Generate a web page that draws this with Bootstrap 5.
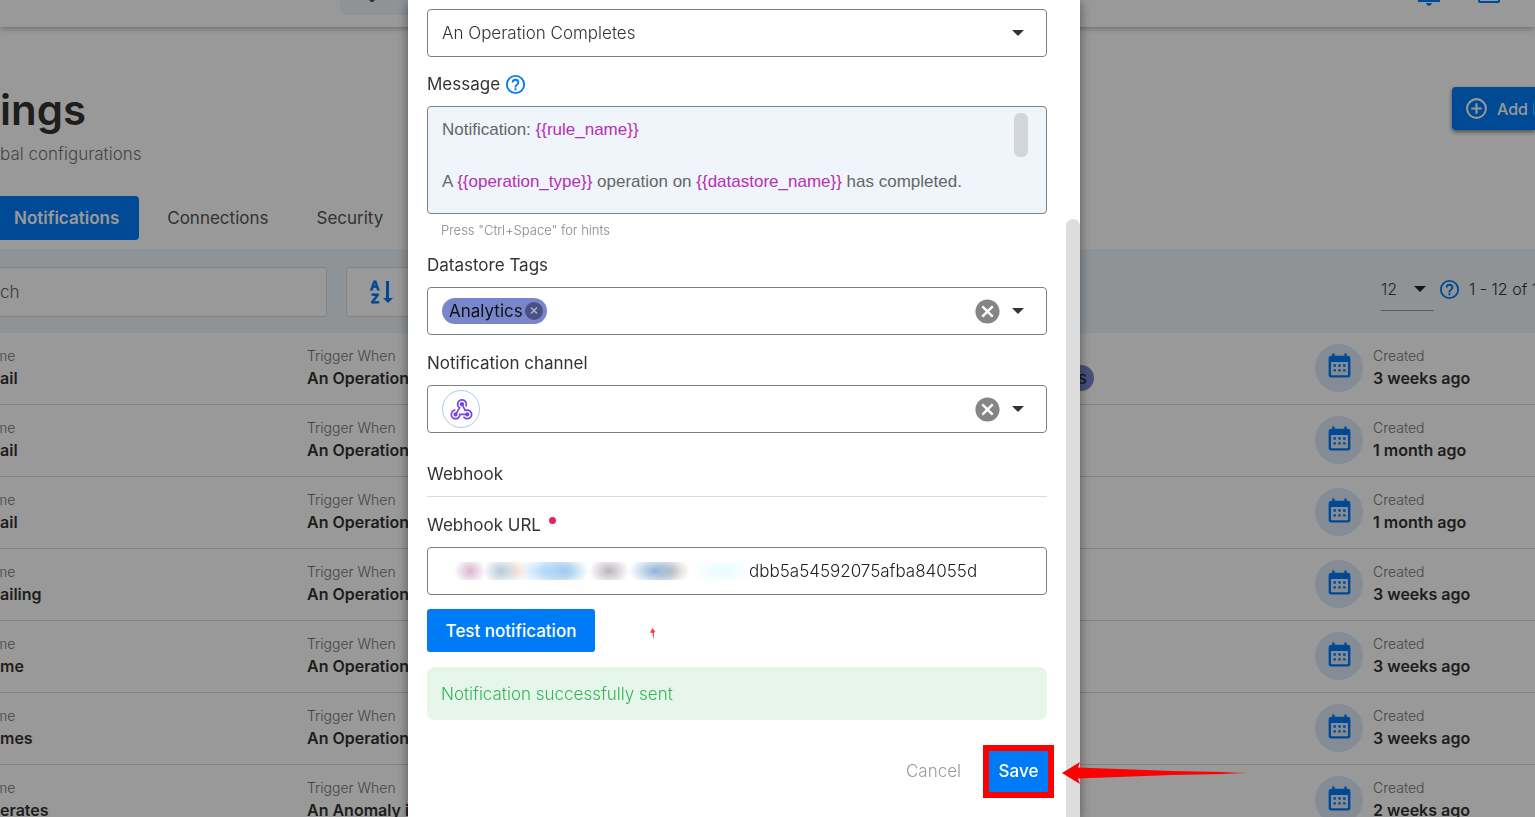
<!DOCTYPE html>
<html lang="en">
<head>
<meta charset="utf-8">
<meta name="viewport" content="width=device-width, initial-scale=1">
<title>Notifications</title>
<link href="https://cdn.jsdelivr.net/npm/bootstrap@5.3.0/dist/css/bootstrap.min.css" rel="stylesheet">
<script src="https://cdn.jsdelivr.net/npm/bootstrap@5.3.0/dist/js/bootstrap.bundle.min.js"></script>
<style>
:root{--brand:#007bf7;--panel:#eff5fa;--ink:#333}
html,body{height:100%}
body{font-family:Inter,"Liberation Sans",sans-serif;font-size:17px;line-height:24px;color:var(--ink);overflow:hidden}
button{font:inherit}
svg{display:block;flex:none}
.page-shell{height:100vh;overflow:hidden}
.top-bar{height:27px;box-shadow:0 1px 6px rgba(0,0,0,.35);padding-left:340px;padding-right:35px}
.top-search{width:440px;height:15px;background:var(--panel);border-radius:0 0 6px 6px;padding-left:29px}
.top-icons{gap:38px}
.title-row{height:169px;padding-top:55px}
.page-title{font-size:42px;line-height:56px;font-weight:600;margin:0 0 4px}
.muted-light{color:#757575;font-weight:300}
.add-btn{background:var(--brand);color:#fff;height:43px;border-radius:4px 0 0 4px;font-size:16px;font-weight:500;padding:0 0 0 11px;margin-top:5px;width:83px;overflow:hidden;white-space:nowrap;box-shadow:0 2px 4px rgba(0,0,0,.5)}
.tab-row{height:53px}
.tab-item{height:44px;line-height:44px;padding:0 20px;border-radius:4px;color:#555;font-weight:400;text-decoration:none}
.tab-item.active{background:var(--brand);color:#fff;font-weight:600;padding-left:14px;border-radius:0 4px 4px 0}
.tool-strip{background:var(--panel);height:84px;padding-top:18px}
.search-box{width:327px;height:50px;border:1px solid #dadada;border-left:0;border-radius:0 4px 4px 0;padding:0;background:#fff;color:#666;font-weight:300}
.sort-btn{width:120px;height:50px;border:1px solid #dadada;border-radius:4px;background:#fff;padding:0 0 0 20px;margin-left:19px;color:var(--brand)}
.pager{font-size:16px}
.per-page{width:53px;height:44px;border:0;border-bottom:1px solid #999;appearance:none;background:transparent url("data:image/svg+xml,%3Csvg xmlns='http://www.w3.org/2000/svg' viewBox='0 0 12 6'%3E%3Cpath fill='%23222' d='M0 0h12L6 6z'/%3E%3C/svg%3E") no-repeat right 8px center/12px 6px;color:#444;font-weight:300;padding:0}
.rules-table{table-layout:fixed;width:100%;margin-top:-1px}
.rules-table td{height:72px;padding:0;border-bottom:1px solid #dadada;vertical-align:middle;overflow:hidden;white-space:nowrap}
.rules-table .cell-label{font-size:14px;line-height:22px;color:#757575;font-weight:300}
.rules-table .cell-value{font-size:16px;line-height:22px;font-weight:600;color:#333;padding-bottom:2px}
.col-name{width:307px}.col-date{width:220px}
.name-label{margin-left:-5px}
.row-pill{display:inline-block;height:26px;line-height:26px;border-radius:13px;background:#7986cb;color:#222;padding:0 7px 0 90px;margin:20px 221px 0 0}
.date-dot{width:48px;height:48px;padding-bottom:4px;margin-right:10px;border-radius:50%;background:#dfe9f8;color:var(--brand)}
.dim-layer{position:fixed;inset:0;background:rgba(0,0,0,.4);padding-right:47px}
.dialog-box{position:relative;width:672px;min-height:100vh;background:#fff;padding:9px 33px 0 19px;box-shadow:0 3px 10px 1px rgba(0,0,0,.4)}
.dialog-scroll{position:absolute;right:0;top:219px;bottom:0;width:14px;background:#ddd;border-radius:7px 7px 0 0}
.field-box{height:48px;border:1px solid #808080;border-radius:4px;background-color:#fff;width:100%;padding:0 14px}
select.field-box{appearance:none;color:#333;font-weight:300;background-image:url("data:image/svg+xml,%3Csvg xmlns='http://www.w3.org/2000/svg' viewBox='0 0 12 6'%3E%3Cpath fill='%23333' d='M0 0h12L6 6z'/%3E%3C/svg%3E");background-repeat:no-repeat;background-position:right 22px center;background-size:12px 6px}
.field-name{display:flex;align-items:center;height:24px;margin:16px 0 10px;font-weight:400}
.field-name.is-tight{margin-top:15px}
.ghost-btn{border:0;background:none;padding:0}
.editor-box{position:relative;height:108px;border:1px solid #808080;border-radius:4px;background:var(--panel);padding:10px 14px;font:17px/26px "Liberation Sans",Arial,sans-serif;color:#666}
.editor-box b{font-weight:400;color:#b62fb6}
.editor-thumb{position:absolute;right:18px;top:6px;width:14px;height:44px;border-radius:6px;background:#d2d5da}
.hint-line{font-size:13px;line-height:20px;font-weight:300;color:#888;margin:6px 0 -2px 14px}
.tag-chip{height:26px;border-radius:13px;background:#7986cb;color:#111;padding:0 4px 0 7px;gap:2px}
.channel-ring{width:38px;height:38px;border:1px solid #a8c8f5;border-radius:50%;color:#7646dc}
.clear-btn{color:#858585;margin-right:10px}
.caret-btn{margin-right:8px}
.section-head{margin-top:29px;height:35px;border-bottom:1px solid #dcdcdc}
.need-dot{width:7px;height:7px;border-radius:50%;background:#e91e63;margin:0 0 9px 8px}
.masked-part{width:307px;height:18px;background:
radial-gradient(ellipse 16px 14px at 28px 50%,#d8b4cf,transparent),
radial-gradient(ellipse 18px 15px at 59px 50%,#b4c8d6,transparent),
radial-gradient(ellipse 12px 14px at 74px 50%,#f7dfcf,transparent),
radial-gradient(ellipse 30px 16px at 105px 50%,#b0d6f8,transparent),
radial-gradient(ellipse 26px 16px at 121px 50%,#8dc1e6,transparent),
radial-gradient(ellipse 20px 15px at 167px 50%,#bdb3bf,transparent),
radial-gradient(ellipse 26px 15px at 213px 50%,#8fb3da,transparent),
radial-gradient(ellipse 20px 14px at 228px 50%,#c5c2bd,transparent),
radial-gradient(ellipse 32px 16px at 280px 50%,#e8fbff,transparent)}
.url-input{border:0;outline:0;padding:0;font-weight:300;color:#222;min-width:0}
.test-btn{height:43px;width:168px;border:0;border-radius:3px;background:var(--brand);color:#fff;font-weight:500;padding:0}
.test-row{margin-top:14px}
.speck{margin-left:55px;margin-top:6px}
.sent-note{height:53px;border-radius:8px;background:#e7f6eb;color:#35b558;font-weight:300;padding:0 14px;margin-top:15px}
.action-row{margin-top:25px}
.action-row button{padding-bottom:2px}
.cancel-btn{color:#999;font-weight:300;margin-right:22px}
.save-btn{width:71px;height:53px;border:6px solid #f00;border-radius:0;background:var(--brand);color:#fff;font-weight:500;padding:0;margin-right:-7px}
.pointer-arrow{position:absolute;left:654px;top:761px}
</style>
</head>
<body>
<main class="page-shell">
  <header class="top-bar d-flex justify-content-between bg-white">
    <div class="top-search"><svg width="6" height="2" viewBox="0 0 6 2"><path fill="#555" d="M0 0h6L4 2H2z"/></svg></div>
    <div class="top-icons d-flex">
      <svg width="22" height="6" viewBox="0 0 22 6" fill="#007bf7"><path d="M0 0h22v2H0zM8 3h6q-1 3-3 3t-3-3z"/></svg>
      <svg width="22" height="4" viewBox="0 0 22 4" fill="none" stroke="#007bf7" stroke-width="2"><path d="M1-2v3q0 1 1 1h18q1 0 1-1v-3"/></svg>
    </div>
  </header>

  <section class="title-row d-flex justify-content-between align-items-start">
    <div>
      <h1 class="page-title">ings</h1>
      <p class="muted-light mb-0">bal configurations</p>
    </div>
    <button class="btn add-btn d-flex align-items-center"><svg class="me-2" width="25" height="25" viewBox="0 0 24 24" fill="currentColor"><path d="M12,20C7.59,20 4,16.41 4,12C4,7.59 7.59,4 12,4C16.41,4 20,7.59 20,12C20,16.41 16.41,20 12,20M12,2A10,10 0 0,0 2,12A10,10 0 0,0 12,22A10,10 0 0,0 22,12A10,10 0 0,0 12,2M13,7H11V11H7V13H11V17H13V13H17V11H13V7Z"/></svg>Add N</button>
  </section>

  <nav class="tab-row d-flex gap-2">
    <a class="tab-item active" href="#">Notifications</a>
    <a class="tab-item" href="#">Connections</a>
    <a class="tab-item" href="#">Security</a>
  </nav>

  <section class="tool-strip d-flex align-items-start">
    <input class="search-box" type="search" aria-label="Search" value="ch">
    <button class="sort-btn" aria-label="Sort">
      <svg width="30" height="26" viewBox="0 0 30 26"><g fill="currentColor" stroke="currentColor" stroke-width=".8" font-family="Liberation Sans" font-weight="700" font-size="13"><text x="3" y="11">A</text><text x="4" y="24">Z</text></g><path fill="currentColor" d="M19 2h3v17h4l-5 5-5-5h3z"/></svg>
    </button>
    <div class="pager d-flex align-items-center ms-auto gap-1">
      <select class="per-page" aria-label="Rows per page"><option>12</option></select>
      <svg width="23" height="23" viewBox="0 0 24 24" fill="#007bf7"><path d="M11,18H13V16H11V18M12,2A10,10 0 0,0 2,12A10,10 0 0,0 12,22A10,10 0 0,0 22,12A10,10 0 0,0 12,2M12,20C7.59,20 4,16.41 4,12C4,7.59 7.59,4 12,4C16.41,4 20,7.59 20,12C20,16.41 16.41,20 12,20M12,6A4,4 0 0,0 8,10H10A2,2 0 0,1 12,8A2,2 0 0,1 14,10C14,12 11,11.75 11,15H13C13,12.75 16,12.5 16,10A4,4 0 0,0 12,6Z"/></svg>
      <span class="ms-1 text-nowrap overflow-hidden fw-light" style="width:66px">1 - 12 of 1</span>
    </div>
  </section>

  <table class="rules-table">
    <colgroup><col class="col-name"><col><col class="col-date"></colgroup>
    <tbody id="rules"></tbody>
  </table>
</main>

<div class="dim-layer d-flex justify-content-center">
  <form class="dialog-box" role="dialog" aria-label="Notification rule">
    <select class="field-box d-block" aria-label="Trigger when"><option>An Operation Completes</option></select>

    <div class="field-name is-tight" id="msg-name">Message
      <svg class="ms-1" width="23" height="23" viewBox="0 0 24 24" fill="#007bf7"><path d="M11,18H13V16H11V18M12,2A10,10 0 0,0 2,12A10,10 0 0,0 12,22A10,10 0 0,0 22,12A10,10 0 0,0 12,2M12,20C7.59,20 4,16.41 4,12C4,7.59 7.59,4 12,4C16.41,4 20,7.59 20,12C20,16.41 16.41,20 12,20M12,6A4,4 0 0,0 8,10H10A2,2 0 0,1 12,8A2,2 0 0,1 14,10C14,12 11,11.75 11,15H13C13,12.75 16,12.5 16,10A4,4 0 0,0 12,6Z"/></svg>
    </div>
    <div class="editor-box">
      <div role="textbox" aria-multiline="true" aria-labelledby="msg-name" contenteditable="true" spellcheck="false">Notification: <b>{{rule_name}}</b><br><br>A <b>{{operation_type}}</b> operation on <b>{{datastore_name}}</b> has completed.</div>
      <span class="editor-thumb"></span>
    </div>
    <p class="hint-line">Press "Ctrl+Space" for hints</p>

    <div class="field-name is-tight" id="tags-name">Datastore Tags</div>
    <div class="field-box d-flex align-items-center" role="group" aria-labelledby="tags-name">
      <span class="tag-chip d-flex align-items-center">Analytics<button type="button" class="ghost-btn" aria-label="Remove"><svg width="18" height="18" viewBox="0 0 18 18"><circle cx="9" cy="9" r="9" fill="#4b5180"/><path d="M6 5.500l6 6M12 5.500l-6 6" stroke="#a9b2df" stroke-width="1.500"/></svg></button></span>
      <button type="button" class="ghost-btn clear-btn ms-auto" aria-label="Clear"><svg width="29" height="29" viewBox="0 0 24 24" fill="currentColor"><path d="M12,2C17.53,2 22,6.47 22,12C22,17.53 17.53,22 12,22C6.47,22 2,17.53 2,12C2,6.47 6.47,2 12,2M15.590,7L12,10.590L8.410,7L7,8.410L10.590,12L7,15.590L8.410,17L12,13.410L15.590,17L17,15.590L13.410,12L17,8.410L15.590,7Z"/></svg></button>
      <button type="button" class="ghost-btn caret-btn" aria-label="Open"><svg width="12" height="6" viewBox="0 0 12 6"><path fill="#333" d="M0 0h12L6 6z"/></svg></button>
    </div>

    <div class="field-name" id="chan-name">Notification channel</div>
    <div class="field-box d-flex align-items-center" role="group" aria-labelledby="chan-name">
      <span class="channel-ring d-flex align-items-center justify-content-center"><svg width="27" height="27" viewBox="0 0 24 24" fill="currentColor"><path d="M10.46,19C9,21.07 6.15,21.59 4.09,20.15C2.04,18.71 1.56,15.84 3,13.75C3.87,12.5 5.21,11.83 6.58,11.77L6.63,13.2C5.72,13.27 4.84,13.74 4.27,14.56C3.27,16 3.58,17.94 4.95,18.91C6.33,19.87 8.26,19.5 9.26,18.07C9.57,17.62 9.75,17.13 9.82,16.63V15.62L15.4,15.58L15.47,15.47C16,14.55 17.15,14.23 18.05,14.75C18.95,15.27 19.26,16.43 18.73,17.35C18.2,18.26 17.04,18.58 16.14,18.06C15.73,17.83 15.44,17.46 15.31,17.04L11.24,17.06C11.13,17.73 10.87,18.38 10.46,19M17.74,11.86C20.27,12.17 22.07,14.44 21.76,16.93C21.45,19.43 19.15,21.2 16.62,20.89C15.13,20.71 13.9,19.86 13.19,18.68L14.43,17.96C14.92,18.73 15.75,19.28 16.75,19.41C18.5,19.62 20.05,18.43 20.26,16.76C20.47,15.09 19.23,13.56 17.5,13.35C16.96,13.29 16.44,13.36 15.97,13.53L15.12,13.97L12.54,9.2H12.32C11.26,9.16 10.41,8.29 10.44,7.25C10.47,6.21 11.4,5.4 12.45,5.44C13.5,5.5 14.33,6.35 14.3,7.39C14.28,7.83 14.11,8.23 13.84,8.54L15.74,12.05C16.36,11.85 17.04,11.78 17.74,11.86M8.25,9.14C7.25,6.79 8.31,4.1 10.62,3.12C12.94,2.14 15.62,3.25 16.62,5.6C17.21,6.97 17.09,8.47 16.42,9.67L15.18,8.95C15.6,8.14 15.67,7.15 15.27,6.22C14.59,4.62 12.78,3.85 11.23,4.5C9.67,5.16 8.97,7 9.65,8.6C9.93,9.26 10.4,9.77 10.97,10.11L11.36,10.32L8.29,15.31C8.32,15.36 8.36,15.42 8.39,15.5C8.88,16.41 8.54,17.56 7.62,18.05C6.71,18.54 5.56,18.18 5.06,17.24C4.57,16.31 4.91,15.16 5.83,14.67C6.22,14.46 6.65,14.41 7.06,14.5L9.37,10.73C8.9,10.3 8.5,9.76 8.25,9.14Z"/></svg></span>
      <button type="button" class="ghost-btn clear-btn ms-auto" aria-label="Clear"><svg width="29" height="29" viewBox="0 0 24 24" fill="currentColor"><path d="M12,2C17.53,2 22,6.47 22,12C22,17.53 17.53,22 12,22C6.47,22 2,17.53 2,12C2,6.47 6.47,2 12,2M15.590,7L12,10.590L8.410,7L7,8.410L10.590,12L7,15.590L8.410,17L12,13.410L15.590,17L17,15.590L13.410,12L17,8.410L15.590,7Z"/></svg></button>
      <button type="button" class="ghost-btn caret-btn" aria-label="Open"><svg width="12" height="6" viewBox="0 0 12 6"><path fill="#333" d="M0 0h12L6 6z"/></svg></button>
    </div>

    <div class="section-head">Webhook</div>

    <label class="field-name" for="hook-url">Webhook URL<span class="need-dot"></span></label>
    <div class="field-box d-flex align-items-center">
      <span class="masked-part flex-shrink-0"></span>
      <input class="url-input flex-grow-1" id="hook-url" type="text" value="dbb5a54592075afba84055d">
    </div>

    <div class="test-row d-flex align-items-center">
      <button type="button" class="test-btn">Test notification</button>
      <svg class="speck" width="6" height="12" viewBox="0 0 6 12"><path fill="#f44" d="M2.500 0L5.500 4 4 4.500V12L2.500 5 0 4.500z"/></svg>
    </div>
    <div class="sent-note d-flex align-items-center" role="status">Notification successfully sent</div>

    <div class="action-row d-flex align-items-center justify-content-end">
      <button type="button" class="ghost-btn cancel-btn">Cancel</button>
      <button type="submit" class="save-btn">Save</button>
    </div>

    <span class="dialog-scroll"></span>
    <svg class="pointer-arrow" width="190" height="24" viewBox="0 0 190 24"><defs><linearGradient id="fade"><stop offset=".85" stop-color="#f00"/><stop offset="1" stop-color="#f00" stop-opacity="0"/></linearGradient></defs><path fill="url(#fade)" d="M0 12L18 1 16 6.500 110 10 187 11.500v1L110 14 16 17.500 18 23z"/></svg>
  </form>
</div>

<script>
const rules = [
  ["ail", "An Operation", "3 weeks ago", "s"],
  ["ail", "An Operation", "1 month ago"],
  ["ail", "An Operation", "1 month ago"],
  ["ailing", "An Operation", "3 weeks ago"],
  ["me", "An Operation", "3 weeks ago"],
  ["mes", "An Operation", "3 weeks ago"],
  ["erates", "An Anomaly i", "2 weeks ago"]
];
const calendar = '<svg width="29" height="29" viewBox="0 0 24 24" fill="currentColor"><path d="M9 11H7V13H9V11M9 15H7V17H9V15M13 11H11V13H13V11M13 15H11V17H13V15M17 11H15V13H17V11M17 15H15V17H17V15M19 4H18V2H16V4H8V2H6V4H5C3.890 4 3 4.900 3 6V20A2 2 0 0 0 5 22H19A2 2 0 0 0 21 20V6A2 2 0 0 0 19 4M19 20H5V9H19V20Z"/></svg>';
document.getElementById("rules").innerHTML = rules.map(([name, trigger, date, tag]) => `
<tr>
  <td><div class="cell-label name-label">me</div><div class="cell-value">${name}</div></td>
  <td><div class="d-flex align-items-center justify-content-between"><div><div class="cell-label">Trigger When</div><div class="cell-value">${trigger}</div></div>${tag ? `<span class="row-pill">${tag}</span>` : ""}</div></td>
  <td><div class="d-flex align-items-center"><span class="date-dot d-flex align-items-center justify-content-center">${calendar}</span><div><div class="cell-label">Created</div><div class="cell-value">${date}</div></div></div></td>
</tr>`).join("");
</script>
</body>
</html>
